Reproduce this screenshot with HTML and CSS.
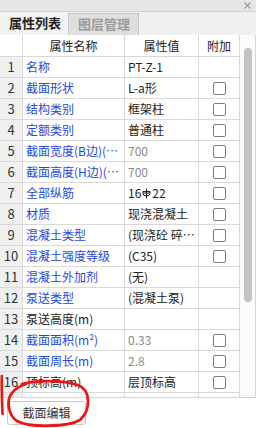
FILE: index.html
```html
<!DOCTYPE html>
<html lang="zh">
<head>
<meta charset="utf-8">
<link rel="stylesheet" href="styles.css">
</head>
<body>
<div class="panel">
  <div class="titlebar">
    <svg class="close" width="7" height="7" viewBox="0 0 7 7"><path d="M0.5 0.5L6.5 6.5M6.5 0.5L0.5 6.5" stroke="#9a9a9a" stroke-width="1.1"/></svg>
  </div>
  <div class="tabs">
    <div class="tab active">属性列表</div>
    <div class="tab">图层管理</div>
  </div>
  <div class="frame">
    <div class="table">
      <div class="row head">
        <div class="c num"></div>
        <div class="c name hc">属性名称</div>
        <div class="c val hc">属性值</div>
        <div class="c add hc">附加</div>
      </div>
      <div class="row"><div class="c num">1</div><div class="c name blue">名称</div><div class="c val">PT-Z-1</div><div class="c add"></div></div>
      <div class="row"><div class="c num">2</div><div class="c name blue">截面形状</div><div class="c val">L-a形</div><div class="c add"><span class="cb"></span></div></div>
      <div class="row"><div class="c num">3</div><div class="c name blue">结构类别</div><div class="c val">框架柱</div><div class="c add"><span class="cb"></span></div></div>
      <div class="row"><div class="c num">4</div><div class="c name blue">定额类别</div><div class="c val">普通柱</div><div class="c add"><span class="cb"></span></div></div>
      <div class="row"><div class="c num">5</div><div class="c name blue">截面宽度(B边)(mm)</div><div class="c val gray">700</div><div class="c add"><span class="cb"></span></div></div>
      <div class="row"><div class="c num">6</div><div class="c name blue">截面高度(H边)(mm)</div><div class="c val gray">700</div><div class="c add"><span class="cb"></span></div></div>
      <div class="row"><div class="c num">7</div><div class="c name blue">全部纵筋</div><div class="c val">16<svg class="rebar" width="9" height="11" viewBox="0 0 9 11"><path d="M4.5 0.5V10.5M1 3.5H8V5.5A3.5 2.5 0 0 1 1 5.5Z M1 5H8" fill="none" stroke="#222" stroke-width="1"/></svg>22</div><div class="c add"><span class="cb"></span></div></div>
      <div class="row"><div class="c num">8</div><div class="c name blue">材质</div><div class="c val">现浇混凝土</div><div class="c add"><span class="cb"></span></div></div>
      <div class="row"><div class="c num">9</div><div class="c name blue">混凝土类型</div><div class="c val">(现浇砼 碎石＜40mm)</div><div class="c add"><span class="cb"></span></div></div>
      <div class="row"><div class="c num">10</div><div class="c name blue">混凝土强度等级</div><div class="c val">(C35)</div><div class="c add"><span class="cb"></span></div></div>
      <div class="row"><div class="c num">11</div><div class="c name blue">混凝土外加剂</div><div class="c val">(无)</div><div class="c add"></div></div>
      <div class="row"><div class="c num">12</div><div class="c name blue">泵送类型</div><div class="c val">(混凝土泵)</div><div class="c add"></div></div>
      <div class="row"><div class="c num">13</div><div class="c name">泵送高度(m)</div><div class="c val"></div><div class="c add"></div></div>
      <div class="row"><div class="c num">14</div><div class="c name blue">截面面积(m²)</div><div class="c val gray">0.33</div><div class="c add"><span class="cb"></span></div></div>
      <div class="row"><div class="c num">15</div><div class="c name blue">截面周长(m)</div><div class="c val gray">2.8</div><div class="c add"><span class="cb"></span></div></div>
      <div class="row"><div class="c num">16</div><div class="c name">顶标高(m)</div><div class="c val">层顶标高</div><div class="c add"><span class="cb"></span></div></div>
      <div class="row"><div class="c num">17</div><div class="c name">底标高(m)</div><div class="c val">层底标高</div><div class="c add"><span class="cb"></span></div></div>
    </div>
    <div class="scrollbar"><div class="thumb"></div></div>
  </div>
  <div class="footer">
    <button class="btn">截面编辑</button>
  </div>
  <svg class="mark" width="256" height="428" viewBox="0 0 256 428">
    <path d="M1.8 376 C1.5 390, 2 402, 2.5 414" fill="none" stroke="#f21414" stroke-width="2.6" stroke-linecap="round"/>
    <path d="M22 384 C36 380, 62 380, 78 385 C91 390, 91 410, 80 420 C68 427, 30 428, 17 421 C8 415, 6 400, 12 393 C15 389, 19 386, 26 384" fill="none" stroke="#f21414" stroke-width="2.8" stroke-linecap="round"/>
  </svg>
</div>
</body>
</html>
```
FILE: styles.css
```css
html, body {
  margin: 0;
  padding: 0;
  background: #ffffff;
}
body {
  width: 256px;
  height: 428px;
  overflow: hidden;
  font-family: "Noto Sans CJK SC", "Noto Sans", sans-serif;
  font-size: 12px;
  color: #222;
}
.panel {
  position: relative;
  width: 256px;
  height: 428px;
  display: flex;
  flex-direction: column;
}
.titlebar {
  height: 11px;
  background: #e6e6e6;
  border-bottom: 1px solid #d2d2d2;
  display: flex;
  justify-content: flex-end;
  align-items: flex-start;
}
.close {
  margin: 2px 5px 0 0;
}
.tabs {
  height: 23px;
  background: #f0f0f0;
  display: flex;
  align-items: stretch;
}
.tab {
  font-size: 13px;
  font-weight: bold;
  line-height: 21px;
  padding: 0 0 0 9px;
  box-sizing: border-box;
  white-space: nowrap;
  overflow: hidden;
  flex: none;
}
.tab.active {
  width: 68px;
  color: #222;
  background: #f2f2f2;
}
.tab:not(.active) {
  width: 71px;
  color: #9a9a9a;
  background: #dfdfdf;
  border: 1px solid #c9c9c9;
  border-bottom: none;
  margin-top: 1px;
  line-height: 20px;
}
.frame {
  height: 363px;
  box-sizing: border-box;
  border-right: 1px solid #d6d6d6;
  border-bottom: 1px solid #d6d6d6;
  display: flex;
  overflow: hidden;
}
.table {
  width: 240px;
  flex: none;
}
.row {
  display: grid;
  grid-template-columns: 23px 102px 74px 41px;
  height: 21px;
  box-sizing: border-box;
  border-bottom: 1px solid #d9d9d9;
}
.row.head {
  height: 22px;
}
.c {
  box-sizing: border-box;
  border-right: 1px solid #d9d9d9;
  white-space: nowrap;
  overflow: hidden;
  text-overflow: ellipsis;
  line-height: 20px;
}
.head .c {
  line-height: 21px;
}
.num {
  background: #f0f0f0;
  text-align: center;
  font-size: 13px;
  color: #333;
}
.head .num {
  background: #ffffff;
}
.name, .val {
  padding-left: 3px;
}
.hc {
  text-align: center;
  padding-left: 0;
  color: #222;
}
.blue {
  color: #2549e2;
}
.gray {
  color: #8c8c8c;
}
.add {
  display: flex;
  align-items: center;
  justify-content: center;
}
.head .add {
  display: block;
  text-align: center;
  color: #222;
}
.cb {
  display: block;
  width: 13px;
  height: 13px;
  box-sizing: border-box;
  border: 1px solid #7d7d7d;
  border-radius: 2px;
  background: #fff;
}
.rebar {
  vertical-align: -1px;
  margin: 0 1px;
}
.scrollbar {
  width: 15px;
  flex: none;
  background: #fbfbfb;
  display: flex;
  justify-content: center;
}
.thumb {
  width: 8px;
  height: 254px;
  margin-top: 13px;
  border-radius: 4px;
  background: #c4c4c4;
}
.footer {
  flex: 1;
  background: #ffffff;
  padding: 3px 0 0 7px;
}
.btn {
  width: 79px;
  height: 24px;
  box-sizing: border-box;
  border: 1px solid #c8c8c8;
  border-radius: 3px;
  background: #fdfdfd;
  font-family: "Noto Sans CJK SC", "Noto Sans", sans-serif;
  font-size: 12px;
  color: #333;
  padding: 0;
  line-height: 22px;
}
.mark {
  position: absolute;
  left: 0;
  top: 0;
  pointer-events: none;
}
```
